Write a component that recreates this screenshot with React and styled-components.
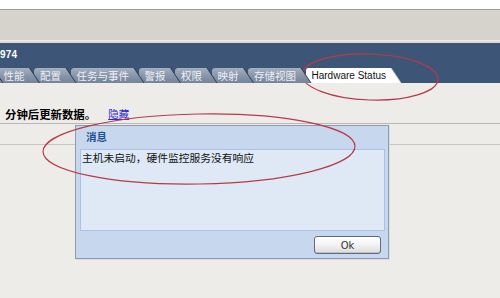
import React from "react";
import styled, { createGlobalStyle } from "styled-components";

const Global = createGlobalStyle`
  html, body { margin: 0; padding: 0; }
  body {
    background: #eeece9;
    font-family: "Noto Sans CJK SC", "Liberation Sans", sans-serif;
    overflow: hidden;
  }
`;

const Page = styled.div`
  position: relative;
  width: 500px;
  height: 298px;
  overflow: hidden;
  background: #eeece9;
  display: flex;
  flex-direction: column;
`;

const TopStrip = styled.div`
  height: 9px;
  background: #ffffff;
`;

const Toolbar = styled.div`
  height: 30px;
  background: #d6d2cc;
  border-top: 1px solid #a2a09c;
  border-bottom: 1px solid #efede9;
`;

const Divider = styled.div`
  height: 2px;
  background: #dedbd6;
`;

const Header = styled.div`
  height: 40px;
  background: #3d5677;
  display: flex;
  flex-direction: column;
  padding-top: 5px;
  box-sizing: border-box;
`;

const HostTitle = styled.div`
  font-family: "Liberation Sans", Arial, sans-serif;
  font-weight: bold;
  font-size: 10px;
  line-height: 14px;
  color: #ffffff;
  padding-left: 0;
  letter-spacing: 0.2px;
`;

const TabStrip = styled.div`
  margin-top: auto;
  display: flex;
  align-items: flex-end;
  margin-left: -18px;
`;

const Tab = styled.div`
  position: relative;
  z-index: ${(p) => p.$z};
  height: 15px;
  line-height: 15px;
  padding: 0 15.5px 0 6px;
  margin-left: ${(p) => (p.$first ? "0" : "-6px")};
  font-family: ${(p) =>
    p.$active
      ? '"Liberation Sans", Arial, sans-serif'
      : '"Noto Sans CJK SC", sans-serif'};
  font-size: ${(p) => (p.$active ? "10px" : "10.5px")};
  color: ${(p) => (p.$active ? "#111111" : "#eef1f5")};
  white-space: nowrap;

  &::before {
    content: "";
    position: absolute;
    inset: 0;
    z-index: -1;
    border-top-left-radius: 3px;
    background: ${(p) => (p.$active ? "#c9d0da" : "#2a3c53")};
    clip-path: polygon(0 0, calc(100% - 10px) 0, 100% 100%, 0 100%);
  }
  &::after {
    content: "";
    position: absolute;
    inset: 0;
    z-index: -1;
    border-top-left-radius: 3px;
    background: ${(p) =>
      p.$active
        ? "#ffffff"
        : "linear-gradient(#a4afc0 0%, #8794a8 55%, #75849a 100%)"};
    clip-path: polygon(
      0 0,
      calc(100% - 11px) 0,
      calc(100% - 1px) 100%,
      0 100%
    );
  }
`;

const Content = styled.div`
  display: flex;
  flex-direction: column;
`;

const Notice = styled.div`
  padding: 23px 0 0 5px;
  height: 16px;
  line-height: 16px;
  display: flex;
  align-items: center;
  gap: 12px;
`;

const NoticeText = styled.span`
  font-weight: bold;
  font-size: 11.4px;
  color: #000000;
`;

const HideLink = styled.span`
  font-size: 10.5px;
  color: #2a2ad0;
  text-decoration: underline;
`;

const TableHead = styled.div`
  margin-top: 1px;
  height: 20px;
  border-top: 1px solid #bab8b4;
  border-bottom: 1px solid #c8c6c2;
`;

const Dialog = styled.div`
  position: absolute;
  left: 75px;
  top: 125px;
  width: 314px;
  height: 134px;
  box-sizing: border-box;
  border: 1px solid #8f9aab;
  background: #c7d7ee;
  display: flex;
  flex-direction: column;
  box-shadow: 1px 1px 0 #d9dde3;
`;

const DialogTitle = styled.div`
  height: 23px;
  line-height: 22px;
  padding-left: 10px;
  font-size: 10.5px;
  font-weight: bold;
  color: #1d4f93;
`;

const DialogBody = styled.div`
  margin: 0 3px 0 4px;
  height: 82px;
  box-sizing: border-box;
  border: 1px solid #a9c2e6;
  background: #dfe9f6;
  padding: 1px 0 0 1px;
  font-size: 10.75px;
  line-height: 14px;
  color: #111111;
`;

const DialogFooter = styled.div`
  display: flex;
  justify-content: flex-end;
  padding: 5px 7px 0 0;
`;

const OkButton = styled.button`
  width: 67px;
  height: 18px;
  padding: 0;
  border: 1px solid #5f6b7c;
  border-radius: 3px;
  background: linear-gradient(#ffffff 0%, #f4f4f4 45%, #dcdcdc 100%);
  font-family: "DejaVu Sans", Tahoma, sans-serif;
  font-size: 10px;
  color: #333333;
  box-shadow: inset 0 -1px 0 #c4c4c4;
`;

const Annotations = styled.svg`
  position: absolute;
  left: 0;
  top: 0;
  pointer-events: none;
`;

const tabs = ["性能", "配置", "任务与事件", "警报", "权限", "映射", "存储视图"];

export default function App() {
  return (
    <>
      <Global />
      <Page>
        <TopStrip />
        <Toolbar />
        <Divider />
        <Header>
          <HostTitle>974</HostTitle>
          <TabStrip>
            <Tab $z={30} $first />
            {tabs.map((t, i) => (
              <Tab key={t} $z={29 - i}>
                {t}
              </Tab>
            ))}
            <Tab $z={10} $active>
              Hardware Status
            </Tab>
          </TabStrip>
        </Header>
        <Content>
          <Notice>
            <NoticeText>分钟后更新数据。</NoticeText>
            <HideLink>隐藏</HideLink>
          </Notice>
          <TableHead />
        </Content>
        <Dialog>
          <DialogTitle>消息</DialogTitle>
          <DialogBody>主机未启动，硬件监控服务没有响应</DialogBody>
          <DialogFooter>
            <OkButton>Ok</OkButton>
          </DialogFooter>
        </Dialog>
        <Annotations width="500" height="298" viewBox="0 0 500 298">
          <ellipse
            cx="370"
            cy="77"
            rx="68"
            ry="23"
            fill="none"
            stroke="#b83a48"
            strokeWidth="1.2"
            transform="rotate(2 370 77)"
          />
          <ellipse
            cx="199"
            cy="149"
            rx="156"
            ry="35"
            fill="none"
            stroke="#b83a48"
            strokeWidth="1.2"
            transform="rotate(-1 199 149)"
          />
        </Annotations>
      </Page>
    </>
  );
}
